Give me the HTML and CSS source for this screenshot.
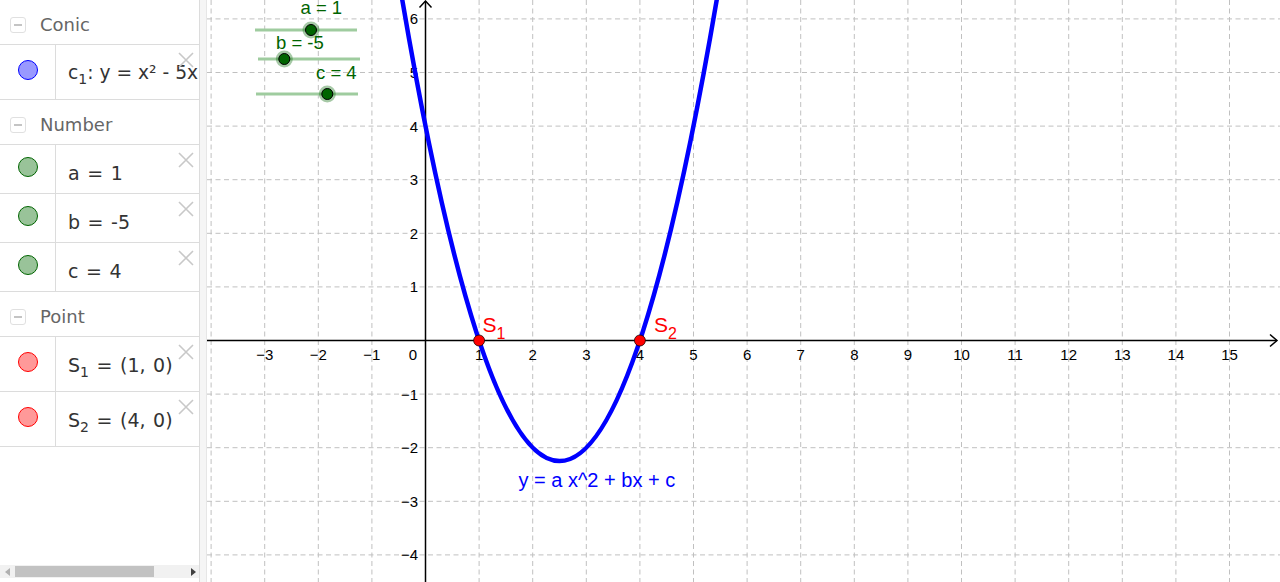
FILE: index.html
```html
<!DOCTYPE html>
<html>
<head>
<meta charset="utf-8">
<link rel="stylesheet" href="styles.css">
</head>
<body>
<div class="app">
  <aside class="algebra">
    <div class="list">
      <div class="header"><span class="collapse"><span class="minus"></span></span><span class="htext">Conic</span></div>
      <div class="item tall">
        <div class="marble-cell"><span class="marble blue"></span></div>
        <div class="content plain"><span class="expr">c<sub>1</sub>: y = x² - 5x + 4</span></div>
        <svg class="close" viewBox="0 0 16 16"><path d="M1 1L15 15M15 1L1 15"/></svg>
      </div>
      <div class="header"><span class="collapse"><span class="minus"></span></span><span class="htext">Number</span></div>
      <div class="item">
        <div class="marble-cell"><span class="marble green"></span></div>
        <div class="content"><span class="expr">a = 1</span></div>
        <svg class="close" viewBox="0 0 16 16"><path d="M1 1L15 15M15 1L1 15"/></svg>
      </div>
      <div class="item">
        <div class="marble-cell"><span class="marble green"></span></div>
        <div class="content"><span class="expr">b = -5</span></div>
        <svg class="close" viewBox="0 0 16 16"><path d="M1 1L15 15M15 1L1 15"/></svg>
      </div>
      <div class="item">
        <div class="marble-cell"><span class="marble green"></span></div>
        <div class="content"><span class="expr">c = 4</span></div>
        <svg class="close" viewBox="0 0 16 16"><path d="M1 1L15 15M15 1L1 15"/></svg>
      </div>
      <div class="header"><span class="collapse"><span class="minus"></span></span><span class="htext">Point</span></div>
      <div class="item tall">
        <div class="marble-cell"><span class="marble red"></span></div>
        <div class="content"><span class="expr">S<sub>1</sub> = (1, 0)</span></div>
        <svg class="close" viewBox="0 0 16 16"><path d="M1 1L15 15M15 1L1 15"/></svg>
      </div>
      <div class="item tall">
        <div class="marble-cell"><span class="marble red"></span></div>
        <div class="content"><span class="expr">S<sub>2</sub> = (4, 0)</span></div>
        <svg class="close" viewBox="0 0 16 16"><path d="M1 1L15 15M15 1L1 15"/></svg>
      </div>
    </div>
    <div class="hscroll">
      <span class="arrow left"></span>
      <span class="thumb"></span>
      <span class="arrow right"></span>
    </div>
  </aside>
  <div class="splitter"></div>
  <main class="graphics">
    <svg class="plot" width="1073" height="582" viewBox="207 0 1073 582">
      <g class="grid">
        <path d="M211.1 0V582M264.7 0V582M318.3 0V582M371.9 0V582M479.1 0V582M532.7 0V582M586.3 0V582M639.9 0V582M693.5 0V582M747.1 0V582M800.7 0V582M854.3 0V582M907.9 0V582M961.5 0V582M1015.1 0V582M1068.7 0V582M1122.3 0V582M1175.9 0V582M1229.5 0V582"/>
        <path d="M207 18.9H1280M207 72.5H1280M207 126.1H1280M207 179.7H1280M207 233.3H1280M207 286.9H1280M207 394.1H1280M207 447.7H1280M207 501.3H1280M207 554.9H1280"/>
      </g>
      <g class="axes">
        <path d="M207 340.5H1277M425.5 582V1"/>
        <path d="M1270 334.5L1277 340.5L1270 346.5M419.5 7.5L425.5 1L431.5 7.5"/>
      </g>
      <g class="ticklabels xl">
        <text x="264.7" y="359.5">−3</text>
        <text x="318.3" y="359.5">−2</text>
        <text x="371.9" y="359.5">−1</text>
        <text x="413" y="359.5">0</text>
        <text x="479.1" y="359.5">1</text>
        <text x="532.7" y="359.5">2</text>
        <text x="586.3" y="359.5">3</text>
        <text x="639.9" y="359.5">4</text>
        <text x="693.5" y="359.5">5</text>
        <text x="747.1" y="359.5">6</text>
        <text x="800.7" y="359.5">7</text>
        <text x="854.3" y="359.5">8</text>
        <text x="907.9" y="359.5">9</text>
        <text x="961.5" y="359.5">10</text>
        <text x="1015.1" y="359.5">11</text>
        <text x="1068.7" y="359.5">12</text>
        <text x="1122.3" y="359.5">13</text>
        <text x="1175.9" y="359.5">14</text>
        <text x="1229.5" y="359.5">15</text>
      </g>
      <g class="ticklabels yl">
        <text x="418" y="24.4">6</text>
        <text x="418" y="78">5</text>
        <text x="418" y="131.6">4</text>
        <text x="418" y="185.2">3</text>
        <text x="418" y="238.8">2</text>
        <text x="418" y="292.4">1</text>
        <text x="418" y="399.6">−1</text>
        <text x="418" y="453.2">−2</text>
        <text x="418" y="506.8">−3</text>
        <text x="418" y="560.4">−4</text>
      </g>
      <g class="sliders">
        <path class="track" d="M255 30H357M258 59H360M256 94H358"/>
        <circle class="halo" cx="311" cy="30" r="8.5"/>
        <circle class="knob" cx="311" cy="30" r="5.5"/>
        <circle class="halo" cx="284.3" cy="59" r="8.5"/>
        <circle class="knob" cx="284.3" cy="59" r="5.5"/>
        <circle class="halo" cx="327.3" cy="94" r="8.5"/>
        <circle class="knob" cx="327.3" cy="94" r="5.5"/>
        <text class="slabel" x="300.5" y="14">a = 1</text>
        <text class="slabel" x="276" y="48.5">b = -5</text>
        <text class="slabel" x="316" y="79">c = 4</text>
      </g>
      <path class="curve" d="M393.34 -53.99Q559.5 976.2 725.66 -53.99"/>
      <text class="clabel" x="518.5" y="486.5">y = a x^2 + bx + c</text>
      <circle class="pt" cx="479.1" cy="340.5" r="5.5"/>
      <circle class="pt" cx="639.9" cy="340.5" r="5.5"/>
      <text class="plabel" x="482.5" y="332">S<tspan class="psub" dy="7">1</tspan></text>
      <text class="plabel" x="654" y="332">S<tspan class="psub" dy="7">2</tspan></text>
    </svg>
  </main>
</div>
</body>
</html>
```
FILE: styles.css
```css
* { box-sizing: border-box; }
html, body { margin: 0; padding: 0; background: #fff; }
body { width: 1280px; height: 582px; overflow: hidden; }
.app { display: flex; width: 1280px; height: 582px; }

.algebra {
  width: 200px;
  flex: none;
  border-right: 1px solid #dcdcdc;
  display: flex;
  flex-direction: column;
  font-family: "DejaVu Sans", sans-serif;
  font-size: 18px;
}
.list { flex: 1; overflow: hidden; }

.header {
  height: 45px;
  border-bottom: 1px solid #dcdcdc;
  display: flex;
  align-items: flex-start;
  padding-top: 17px;
  padding-left: 10px;
  color: #666;
}
.collapse {
  width: 16px; height: 16px;
  border: 1px solid #e0e0e0;
  border-radius: 3px;
  display: flex; align-items: center; justify-content: center;
  flex: none;
}
.minus { width: 8px; height: 2px; background: #c4c4c4; }
.htext { margin-left: 14px; line-height: 18px; margin-top: -1px; }

.item {
  position: relative;
  height: 49px;
  border-bottom: 1px solid #dcdcdc;
  display: flex;
  align-items: stretch;
}
.item.tall { height: 55px; }
.marble-cell {
  width: 56px;
  flex: none;
  border-right: 1px solid #dcdcdc;
  display: flex;
  justify-content: center;
  align-items: flex-start;
  padding-top: 12px;
  padding-left: 1px;
}
.item.tall .marble-cell { padding-top: 15px; }
.marble {
  width: 20px; height: 20px;
  border-radius: 50%;
  border: 1px solid;
}
.marble.blue { background: #9999ff; border-color: #0000ff; }
.marble.green { background: #99c399; border-color: #006400; }
.marble.red { background: #ff9999; border-color: #ff0000; }

.content {
  flex: 1;
  overflow: hidden;
  white-space: nowrap;
  padding-left: 12px;
  padding-top: 17px;
  color: #333;
  font-size: 19px;
  word-spacing: 1.5px;
  line-height: 22px;
}
.content.plain { font-size: 18.7px; word-spacing: 0; }
.item.tall .content { padding-top: 17px; }
.expr sub { font-size: 14px; vertical-align: -5px; line-height: 0; }

.close {
  position: absolute;
  top: 7px;
  right: 5px;
  width: 16px; height: 16px;
  fill: none;
  stroke: #c8c8c8;
  stroke-width: 1.6;
}

.hscroll {
  height: 13px;
  margin-bottom: 4px;
  background: #f1f1f1;
  display: flex;
  align-items: center;
  padding-left: 5px;
}
.arrow { width: 0; height: 0; border-top: 4px solid transparent; border-bottom: 4px solid transparent; }
.arrow.left { border-right: 5px solid #b0b0b0; }
.arrow.right { border-left: 5px solid #404040; margin-left: 37px; }
.thumb { width: 139px; height: 11px; background: #c2c2c2; margin-left: 5px; }

.splitter {
  width: 7px;
  flex: none;
  background: #f5f5f5;
  border-right: 1px solid #e6e6e6;
}
.graphics { flex: 1; overflow: hidden; }
.plot { display: block; }

.grid path { fill: none; stroke: #c0c0c0; stroke-width: 1; stroke-dasharray: 5 3.5; }
.axes path { fill: none; stroke: #000; stroke-width: 1.5; }
.ticklabels text { font-family: "Liberation Sans", Arial, sans-serif; font-size: 15px; fill: #000; }
.xl text { text-anchor: middle; }
.yl text { text-anchor: end; }

.track { fill: none; stroke: #9fcc9f; stroke-width: 3; }
.halo { fill: #006400; fill-opacity: 0.35; }
.knob { fill: #006400; stroke: #000; stroke-width: 1; }
.slabel { font-family: "Liberation Sans", Arial, sans-serif; font-size: 18.5px; fill: #006400; }

.curve { fill: none; stroke: #0000ff; stroke-width: 4.5; }
.clabel { font-family: "Liberation Sans", Arial, sans-serif; font-size: 20px; fill: #0000ff; }
.pt { fill: #ff0000; stroke: #000; stroke-opacity: 0.7; stroke-width: 1; }
.plabel { font-family: "Liberation Sans", Arial, sans-serif; font-size: 21px; fill: #ff0000; }
.psub { font-size: 16px; }
```
